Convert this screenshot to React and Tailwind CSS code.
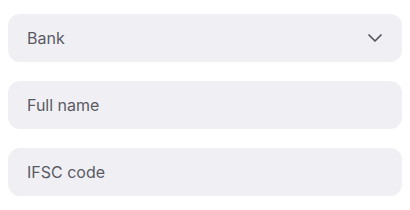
import { ChevronDown } from 'lucide-react';

const Field = ({ label, select }) => (
  <div className="flex h-12 w-full items-center justify-between rounded-xl bg-[#f0f0f4] pl-[19px] pr-[15px]">
    <span className="text-base text-[#5a5a64]">{label}</span>
    {select && <ChevronDown size={24} strokeWidth={1.75} className="text-[#55555f]" />}
  </div>
);

export default function App() {
  return (
    <div
      className="flex w-[410px] flex-col gap-[19px] bg-white px-2 pt-[14px]"
      style={{ fontFamily: 'Inter, "Noto Sans", sans-serif' }}
    >
      <Field label="Bank" select />
      <Field label="Full name" />
      <Field label="IFSC code" />
    </div>
  );
}
